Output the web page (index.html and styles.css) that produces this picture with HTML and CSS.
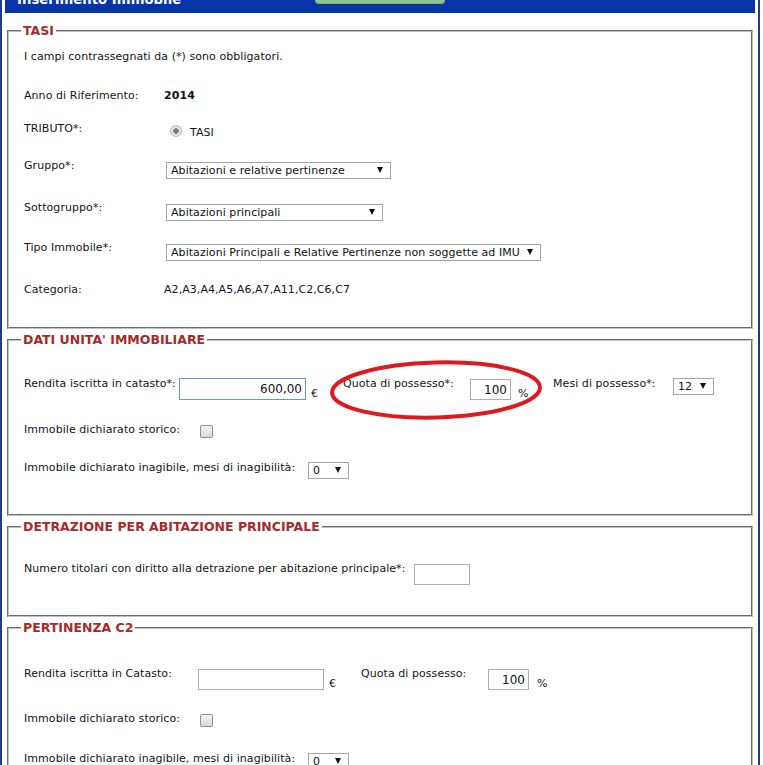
FILE: index.html
```html
<!DOCTYPE html>
<html lang="it">
<head>
  <meta charset="UTF-8">
  <title>Inserimento Immobile</title>
  <link rel="stylesheet" href="styles.css">
</head>
<body>

<div class="page">

  <!-- Barra titolo -->
  <div class="topbar">
    <h1>Inserimento Immobile</h1>
    <span class="back"></span>
  </div>

  <!-- TASI -->
  <fieldset class="box box-tasi">
    <legend>TASI</legend>
    <div class="tasi-grid">
      <p class="note">I campi contrassegnati da (*) sono obbligatori.</p>

      <span class="lbl">Anno di Riferimento:</span>
      <span class="val"><b>2014</b></span>

      <span class="lbl">TRIBUTO*:</span>
      <span class="val ctl"><input type="radio" class="radio" checked><span>TASI</span></span>

      <span class="lbl">Gruppo*:</span>
      <span class="val ctl">
        <span class="dropdown dd-gruppo">
          <select><option>Abitazioni e relative pertinenze</option></select>
        </span>
      </span>

      <span class="lbl">Sottogruppo*:</span>
      <span class="val ctl">
        <span class="dropdown dd-sotto">
          <select><option>Abitazioni principali</option></select>
        </span>
      </span>

      <span class="lbl">Tipo Immobile*:</span>
      <span class="val ctl">
        <span class="dropdown dd-tipo">
          <select><option>Abitazioni Principali e Relative Pertinenze non soggette ad IMU</option></select>
        </span>
      </span>

      <span class="lbl">Categoria:</span>
      <span class="val">A2,A3,A4,A5,A6,A7,A11,C2,C6,C7</span>
    </div>
  </fieldset>

  <!-- DATI UNITA' IMMOBILIARE -->
  <fieldset class="box box-dati">
    <legend>DATI UNITA' IMMOBILIARE</legend>
    <div class="stack stack-dati">
      <div class="line">
        <span class="lbl lbl-rendita">Rendita iscritta in catasto*:</span>
        <span class="fld fld-rendita">
          <input type="text" class="txt in-rendita focus" value="600,00">
          <span class="unit">€</span>
        </span>
        <span class="lbl lbl-quota">Quota di possesso*:</span>
        <span class="fld fld-quota">
          <input type="text" class="txt in-quota" value="100">
          <span class="unit unit-pct">%</span>
        </span>
        <span class="lbl lbl-mesi">Mesi di possesso*:</span>
        <span class="fld fld-sel">
          <span class="dropdown dd-num">
            <select><option>12</option></select>
          </span>
        </span>

        <!-- evidenziazione a mano -->
        <svg class="mark" width="216" height="64" viewBox="0 0 216 64">
          <ellipse cx="107" cy="31" rx="104" ry="27.5" transform="rotate(-1.5 107 31)"
                   fill="none" stroke="#e0181f" stroke-width="4"/>
          <path d="M12 22 Q40 6 96 4" fill="none" stroke="#e0181f" stroke-width="2"/>
        </svg>
      </div>

      <div class="line">
        <span class="lbl lbl-storico">Immobile dichiarato storico:</span>
        <input type="checkbox" class="check">
      </div>

      <div class="line">
        <span class="lbl lbl-inagibile">Immobile dichiarato inagibile, mesi di inagibilità:</span>
        <span class="fld fld-sel">
          <span class="dropdown dd-num">
            <select><option>0</option></select>
          </span>
        </span>
      </div>
    </div>
  </fieldset>

  <!-- DETRAZIONE -->
  <fieldset class="box box-detr">
    <legend>DETRAZIONE PER ABITAZIONE PRINCIPALE</legend>
    <div class="line">
      <span class="lbl lbl-titolari">Numero titolari con diritto alla detrazione per abitazione principale*:</span>
      <span class="fld">
        <input type="text" class="txt in-titolari" value="">
      </span>
    </div>
  </fieldset>

  <!-- PERTINENZA C2 -->
  <fieldset class="box box-pert">
    <legend>PERTINENZA C2</legend>
    <div class="stack stack-pert">
      <div class="line">
        <span class="lbl lbl-rendita2">Rendita iscritta in Catasto:</span>
        <span class="fld fld-rendita2">
          <input type="text" class="txt in-rendita2" value="">
          <span class="unit">€</span>
        </span>
        <span class="lbl lbl-quota">Quota di possesso:</span>
        <span class="fld">
          <input type="text" class="txt in-quota" value="100">
          <span class="unit unit-pct2">%</span>
        </span>
      </div>

      <div class="line">
        <span class="lbl lbl-storico">Immobile dichiarato storico:</span>
        <input type="checkbox" class="check">
      </div>

      <div class="line">
        <span class="lbl lbl-inagibile">Immobile dichiarato inagibile, mesi di inagibilità:</span>
        <span class="fld fld-sel">
          <span class="dropdown dd-num">
            <select><option>0</option></select>
          </span>
        </span>
      </div>
    </div>
  </fieldset>

</div>

</body>
</html>
```

FILE: styles.css
```css
* {
  box-sizing: border-box;
}
body {
  margin: 0;
  background: #fff;
  font-family: "DejaVu Sans", Verdana, sans-serif;
  font-size: 11px;
  line-height: 15px;
  letter-spacing: 0.06px;
  color: #141414;
}
.page {
  width: 760px;
  min-height: 820px;
  margin-top: -8px;
  padding: 0 3px;
  border-left: 2px solid #1d3d8c;
  border-right: 2px solid #1d3d8c;
}

/* barra titolo */
.topbar {
  display: flex;
  align-items: flex-start;
  height: 21px;
  padding-left: 12px;
  background: #0535a7;
}
.topbar h1 {
  width: 298px;
  margin: 0;
  font-size: 13.2px;
  line-height: 16px;
  font-weight: bold;
  color: #fff;
}
.topbar .back {
  width: 130px;
  height: 12px;
  background: #94c190;
  border: 1px solid #7fae7b;
  border-top: 0;
  border-radius: 0 0 4px 4px;
}

/* riquadri */
.box {
  min-width: 0;
  margin: 11px 2px 0;
  padding: 11px 15px 30px;
  border: 2px groove #c0c0c0;
}
.box + .box {
  margin-top: 4px;
}
.box legend {
  margin-left: -3px;
  padding: 0 2px;
  font-size: 12.5px;
  line-height: 14px;
  font-weight: bold;
  letter-spacing: 0;
  color: #a52a2a;
}
.box-dati {
  padding-top: 29px;
  padding-bottom: 34px;
}
.box-detr {
  padding-top: 27px;
  padding-bottom: 30px;
}
.box-pert {
  padding-top: 31px;
  padding-bottom: 60px;
}

/* griglia TASI */
.tasi-grid {
  display: grid;
  grid-template-columns: 140px 1fr;
  grid-template-rows: 39px 33px 37px 42px 40px 42px 15px;
  align-items: start;
}
.tasi-grid .note {
  grid-column: 1 / -1;
  margin: 0;
}
.ctl {
  display: flex;
  align-items: flex-start;
  padding-top: 4px;
}

/* righe */
.stack {
  display: grid;
}
.stack-dati {
  grid-template-rows: 46px 38px 20px;
}
.stack-pert {
  grid-template-rows: 45px 40px 20px;
}
.line {
  position: relative;
  display: flex;
  align-items: flex-start;
}
.lbl {
  flex: none;
}
.fld {
  display: flex;
  flex: none;
  align-items: flex-start;
  margin-top: 3px;
}
.fld-sel {
  margin-top: 2px;
}
.lbl-rendita { width: 155px; }
.fld-rendita { width: 164px; }
.lbl-quota { width: 127px; }
.fld-quota { width: 83px; }
.lbl-mesi { width: 120px; }
.lbl-storico { width: 172px; }
.lbl-inagibile { width: 284px; }
.lbl-titolari { width: 390px; }
.lbl-rendita2 { width: 174px; }
.fld-rendita2 { width: 163px; }

/* campi */
.txt {
  height: 21px;
  margin: 0;
  padding: 0 3px;
  border: 1px solid #abadb3;
  border-radius: 0;
  background: #fff;
  font: 12px "DejaVu Sans", Verdana, sans-serif;
  color: #111;
  text-align: right;
  outline: none;
}
.txt.focus {
  height: 22px;
  margin-top: -1px;
  border-color: #5e9ad9;
}
.in-rendita { width: 127px; }
.in-rendita2 { width: 126px; }
.in-quota { width: 41px; }
.in-titolari { width: 56px; }

.unit {
  align-self: flex-end;
  margin-left: 5px;
  line-height: 12px;
}
.unit-pct { margin-left: 7px; }
.unit-pct2 { margin-left: 8px; }

.dropdown {
  position: relative;
  display: inline-block;
  height: 17px;
  margin-left: 2px;
}
.dropdown select {
  -webkit-appearance: none;
  appearance: none;
  width: 100%;
  height: 17px;
  margin: 0;
  padding: 0 14px 0 4px;
  border: 1px solid #a6a6a6;
  border-radius: 0;
  background: #fff;
  font: 11px "DejaVu Sans", Verdana, sans-serif;
  letter-spacing: 0.06px;
  color: #111;
}
.dropdown::after {
  content: "";
  position: absolute;
  top: 5px;
  right: 8px;
  border-left: 3.5px solid transparent;
  border-right: 3.5px solid transparent;
  border-top: 6px solid #111;
}
.dd-gruppo { width: 225px; }
.dd-sotto { width: 217px; }
.dd-tipo { width: 375px; }
.dd-num { width: 41px; margin-left: 0; }

.radio {
  -webkit-appearance: none;
  appearance: none;
  width: 12px;
  height: 12px;
  margin: 0 8px 0 6px;
  border: 1px solid #b8b8b8;
  border-radius: 50%;
  background: radial-gradient(circle, #7c7c7c 0 2.5px, #e4e4e4 3px);
}
.check {
  -webkit-appearance: none;
  appearance: none;
  width: 13px;
  height: 13px;
  margin: 3px 0 0 4px;
  border: 1px solid #8e8f8f;
  border-radius: 2px;
  background: linear-gradient(#f4f4f4, #d9d9d9);
}

/* cerchio rosso sopra i campi */
.mark {
  position: absolute;
  top: -17px;
  left: 305px;
}
```
